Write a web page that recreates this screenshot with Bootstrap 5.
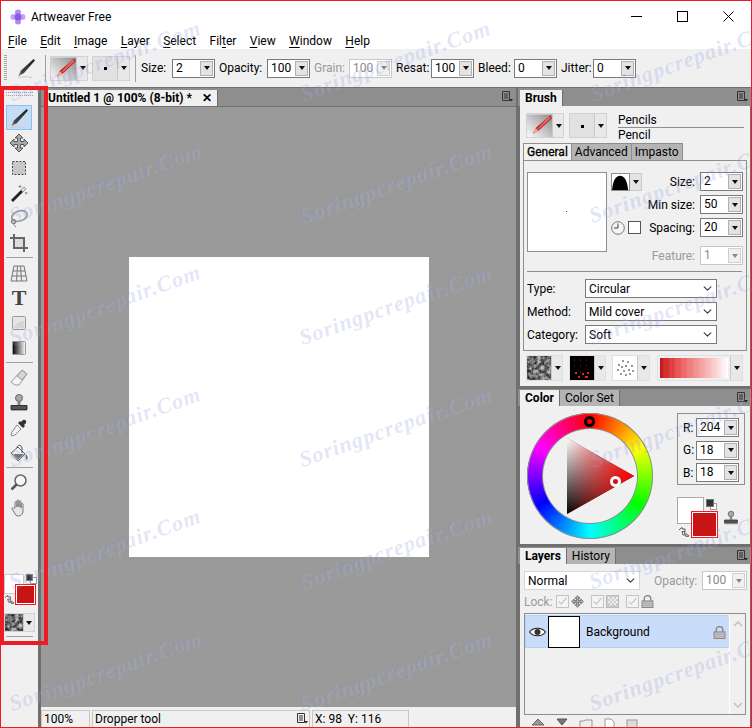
<!DOCTYPE html>
<html lang="en">
<head>
<meta charset="UTF-8">
<title>Artweaver Free</title>
<link href="https://cdn.jsdelivr.net/npm/bootstrap@5.3.0/dist/css/bootstrap.min.css" rel="stylesheet">
<style>
html,body{margin:0;height:728px;overflow:hidden;background:#f0f0f0}
body{font-family:Roboto,"Noto Sans",sans-serif;font-size:12px;line-height:16px;color:#000}
.aw-app{position:relative;width:752px;height:728px;overflow:hidden;display:flex;flex-direction:column}
.aw-title{height:33px;background:#fff;padding-left:10px;flex:none}
.aw-title .aw-name{margin-left:5px}
.aw-winbtns{margin-left:auto;margin-right:18px;gap:35px}
.aw-menu{height:16px;background:#fff;padding-left:8px;gap:13.4px;flex:none}
.aw-menu u{text-underline-offset:2px}
.aw-toolbar{height:38px;background:#f0f0f0;padding-left:4px;flex:none;display:grid;grid-template-columns:3px 25px 6px 38px 38px 3px 27px 43px 44px 43px 31px 43px 31px 43px 32px 43px 28px 43px;column-gap:4px;align-items:center}
.aw-grip-v{width:3px;height:26px;background:repeating-linear-gradient(#a8a8a8 0 1px,transparent 1px 2px)}
.aw-vsep{width:1px;height:27px;background:#a0a0a0;justify-self:end}
.aw-combo{height:19px;border:1px solid #7a7a7a;background:#fff;display:flex;align-items:center;padding-left:3px;position:relative;line-height:15px;box-shadow:inset 0 0 0 1px #fff}
.aw-combo i{position:absolute;right:1px;top:1px;bottom:1px;width:13px;background:#e3e3e3;border:1px solid #b0b0b0}
.aw-combo i::after,.aw-btn i::after{content:"";position:absolute;left:50%;top:50%;margin:-2px 0 0 -3px;border:3px solid transparent;border-top:4px solid #111;border-bottom:0}
.aw-combo.aw-off{border-color:#c8c8c8;color:#8a8a8a}
.aw-combo.aw-off i{background:#f0f0f0;border-color:#d0d0d0}
.aw-combo.aw-off i::after{border-top-color:#888}
.aw-off-text{color:#9a9a9a}
.aw-btn{height:25px;display:flex;border:1px solid #d2d2d2;background:#f0f0f0;overflow:hidden}
.aw-btn svg{flex:none;display:block}
.aw-btn i{flex:none;width:12px;position:relative;background:#e8e8e8;border-left:1px solid #c9c9c9}
.aw-tip{flex:1 1 auto;background:#e1e1e1;position:relative}
.aw-tip::after{content:"";position:absolute;left:50%;top:50%;width:3px;height:3px;margin:-1px 0 0 -1px;background:#000}
.aw-main{flex:1 1 auto;display:flex;background:#6f6f6f;padding-top:1px;min-height:0;border-bottom:1px solid #ed1c24}
.aw-toolbox{width:38px;flex:none;background:#f0f0f0;display:flex;flex-direction:column;align-items:center;padding-top:4px}
.aw-grip-h{width:27px;height:4px;border-top:1px dotted #9a9a9a;border-bottom:1px dotted #9a9a9a;margin-bottom:9px}
.aw-tool{width:26px;height:25px;flex:none;display:flex;align-items:center;justify-content:center;border:1px solid transparent}
.aw-tool.aw-on{background:#c4ddf5;border-color:#8cc2f0}
.aw-tool-t{font-family:"Liberation Serif",serif;font-weight:700;font-size:22px;color:#444;line-height:22px}
.aw-toolsep{width:27px;height:1px;background:#a0a0a0;margin:2px 0;flex:none}
.aw-swatches{position:relative;width:34px;height:31px;margin-top:53px;flex:none}
.aw-sw-back{position:absolute;left:2px;top:1px;width:20px;height:20px;background:#fff;border:1px solid #ccc}
.aw-sw-front{position:absolute;left:13px;top:11px;width:21px;height:21px;background:#c81414;border:1px solid #ed1c24;box-shadow:inset 0 0 0 1px #fff}
.aw-sw-k{position:absolute;left:24px;top:1px;width:7px;height:7px;background:#333;border:1px solid #777}
.aw-sw-w{position:absolute;left:28px;top:4px;width:7px;height:7px;background:#fff;border:1px solid #999}
.aw-sw-swap{position:absolute;left:2px;top:22px}
.aw-texbtn{width:31px;height:19px;margin-top:9px;flex:none}
.aw-doc{width:475px;flex:none;margin-left:3px;display:flex;flex-direction:column;min-height:0}
.aw-strip{height:18px;flex:none;background:#8e8e8e;display:flex;align-items:flex-end;position:relative;padding-left:2px}
.aw-tab{height:16px;padding:0 5px;display:flex;align-items:center;background:#b4b4b4;border-right:1px solid #6f6f6f;line-height:15px}
.aw-tab.aw-act{background:#f0f0f0;font-weight:700}
.aw-panelmenu{position:absolute;right:3px;top:3px}
.aw-doc .aw-tab{margin-left:3px;width:172px;padding:0 5px 0 2px;justify-content:space-between;white-space:nowrap;overflow:hidden}
.aw-canvasarea{height:600px;flex:none;margin-top:1px;background:#9a9a9a;display:flex;align-items:center}
.aw-canvas{width:300px;height:300px;background:#fff;margin-left:88px}
.aw-status{flex:1 1 auto;background:#f0f0f0;display:flex;gap:2px;padding-top:3px}
.aw-field{height:18px;line-height:16px;background:#f0f0f0;border:1px solid #c8c8c8;padding-left:2px;position:relative}
.aw-f1{width:49px}
.aw-f2{width:218px}
.aw-f3{width:97px}
.aw-f2 svg{position:absolute;right:1px;top:2px}
.aw-right{width:233px;flex:none;margin-left:2px;display:flex;flex-direction:column;gap:3px;min-height:0}
.aw-body{background:#f0f0f0;margin:0 1px 0 2px;flex:none}
.aw-brush{height:280px;padding-left:6px;padding-top:7px}
.aw-brushtop{height:25px;gap:5px}
.aw-w38{width:38px}
.aw-names{width:126px;margin-left:6px;line-height:14px}
.aw-names div:first-child{border-bottom:1px solid #8e8e8e;height:15px;line-height:15px}
.aw-names div:last-child{height:14px}
.aw-subtabs{margin:5px 0 0 -3px;height:17px;align-items:flex-end}
.aw-subtabs .aw-tab{height:17px;padding:0 3px;background:#b4b4b4;border:1px solid #8e8e8e;border-bottom:0;border-left:0}
.aw-subtabs .aw-tab.aw-act{background:#f0f0f0;font-weight:400;-webkit-text-stroke:.3px #000;border-left:1px solid #8e8e8e}
.aw-tabbody{width:224px;height:191px;margin-left:-3px;border:1px solid #8e8e8e;padding:11px 3px 0 3px}
.aw-preview{width:80px;height:80px;background:#fff;border:1px solid #8e8e8e;flex:none;position:relative}
.aw-preview::after{content:"";position:absolute;left:38px;top:38px;width:1px;height:1px;background:#333}
.aw-brushgrid{margin-left:4px;width:133px;height:93px}
.aw-brow{height:19px;display:flex;align-items:center;margin-bottom:4px}
.aw-brow.aw-feat{margin-top:9px}
.aw-slot{width:31px;flex:none;display:flex;align-items:center}
.aw-lab{flex:1 1 auto;text-align:right;padding-right:5px;white-space:nowrap}
.aw-w43{width:43px;flex:none}
.aw-curve{width:19px;height:18px;border:1px solid #8e8e8e;flex:none;display:block}
.aw-curvear{flex:none;width:12px;height:18px;background:#e3e3e3;border:1px solid #c9c9c9;border-left:0;position:relative}
.aw-curvear::after{content:"";position:absolute;left:3px;top:6px;border:3px solid transparent;border-top:4px solid #111;border-bottom:0}
.aw-chk{width:13px;height:13px;border:1px solid #555;background:#fff;margin-left:3px;flex:none}
.aw-hline{height:1px;background:#8e8e8e;margin:6px 1px 7px 0}
.aw-selrow{display:flex;align-items:center;height:19px;margin-bottom:4px}
.aw-selrow>span{width:58px;flex:none}
.aw-select.form-select{height:19px;min-height:0;font-size:12px;line-height:15px;padding:1px 0 0 3px;border:1px solid #7a7a7a;border-radius:0;color:#000;background-color:#fff;background-position:right 3px center;background-size:11px 9px;font-family:inherit;box-shadow:none}
.aw-w132{width:132px}
.aw-w116{width:116px}
.aw-select.aw-soft{border-color:#d6d6d6}
.aw-swrow{height:26px;margin:4px 0 0 0;gap:6px}
.aw-swrow .aw-btn{height:26px;border-color:#e0e0e0}
.aw-w37{width:37px}
.aw-w37b{width:38px}
.aw-w86{width:86px;margin-left:1px}
.aw-grad{flex:1 1 auto;margin:2px;background:repeating-linear-gradient(90deg,transparent 0 3px,rgba(255,255,255,.05) 3px 6px),linear-gradient(90deg,#c81414,#e66 35%,#f5b5b5 70%,#fff)}
.aw-strip .aw-tab+.aw-tab{font-weight:400}
.aw-colorstrip{height:17px}
.aw-colorbody{height:138px;padding:7px 0 0 7px}
.aw-wheel{position:relative;width:126px;height:126px;border-radius:50%;flex:none;background:conic-gradient(#f00,#ff0 60deg,#0f0 120deg,#0ff 180deg,#00f 240deg,#f0f 300deg,#f00);box-shadow:0 0 0 1px #8e8e8e inset}
.aw-hole{position:absolute;left:16px;top:16px;width:94px;height:94px;border-radius:50%;background:#f0f0f0;box-shadow:0 0 0 1px #8e8e8e}
.aw-triwrap{position:absolute;left:40px;top:25px;filter:drop-shadow(0 0 .6px #555)}
.aw-tri{width:67px;height:76px;clip-path:polygon(0 0,100% 50%,0 100%);background:linear-gradient(90deg,rgba(255,0,0,0),#f00 98%),linear-gradient(#fff,#000)}
.aw-ring{position:absolute;border-radius:50%;width:11px;height:11px}
.aw-ring1{left:57px;top:3px;border:3px solid #000;background:transparent}
.aw-ring2{left:83px;top:63px;border:3px solid #fff;background:#c81414}
.aw-rgbcol{margin-left:24px;width:68px;flex:none}
.aw-rgbbox{width:68px;height:72px;border:1px solid #8e8e8e;padding:4px 5px 0 5px}
.aw-rgbrow{height:19px;margin-bottom:3.5px;display:flex;align-items:center;justify-content:space-between}
.aw-colorsw{position:relative;height:42px;margin-top:12px;width:70px}
.aw-cs-back{position:absolute;left:0;top:0;width:27px;height:27px;background:#fff;border:1px solid #aaa}
.aw-cs-front{position:absolute;left:14px;top:14px;width:27px;height:27px;background:#c81414;border:1px solid #ed1c24;box-shadow:inset 0 0 0 1px #fff}
.aw-cs-k{position:absolute;left:29px;top:2px;width:8px;height:8px;background:#333;border:1px solid #777}
.aw-cs-w{position:absolute;left:33px;top:6px;width:7px;height:7px;background:#fff;border:1px solid #999}
.aw-cs-swap{position:absolute;left:1px;top:30px}
.aw-cs-stamp{position:absolute;left:46px;top:13px}
.aw-layerbody{flex:1 1 auto;padding:7px 0 0 4px;overflow:hidden;min-height:0}
.aw-layertop{height:19px}
.aw-oplab{margin-left:14px;width:48px;color:#9a9a9a}
.aw-w45{width:45px;flex:none}
.aw-lockrow{height:13px;margin-top:5px;color:#9a9a9a}
.aw-lockrow>span{width:32px;flex:none}
.aw-lk{width:13px;height:13px;flex:none;border:1px solid #c4c4c4;background:#f4f4f4;display:block}
.aw-lkicon{flex:none;margin:0 7px 0 2px;display:block}
.aw-list{width:222px;height:102px;margin-top:5px;border:1px solid #8e8e8e;display:flex;padding-top:1px}
.aw-rows{width:204px;flex:none}
.aw-layer{height:33px;background:#c9dcf9;border:1px solid #b7cff2;border-right-color:#c9dcf9;display:flex;align-items:center;padding-left:3px;position:relative}
.aw-thumb{width:32px;height:32px;background:#fff;border:1px solid #000;margin-left:2px;flex:none}
.aw-layer span{margin-left:6px}
.aw-layer .aw-lklayer{position:absolute;right:2px;top:10px}
.aw-scroll{flex:1 1 auto;border-left:1px solid #fff;display:flex;flex-direction:column;align-items:center;justify-content:space-between;padding:6px 0}
.aw-layerbtns{margin-top:3px;padding-left:7px;gap:11px;height:12px}
.aw-winedge{position:absolute;inset:0;border:1px solid #ed1c24;pointer-events:none}
.aw-highlight{position:absolute;left:0;top:86px;width:48px;height:559px;border:4px solid #ed1c24;pointer-events:none}
.aw-water{position:absolute;left:-40px;top:0;display:grid;grid-template-columns:repeat(3,290px);grid-auto-rows:122px;pointer-events:none}
.aw-water div{display:flex;align-items:center;justify-content:center;font-family:"Liberation Serif",serif;font-style:italic;font-weight:700;font-size:22px;letter-spacing:1px;color:rgba(110,125,215,.2);text-shadow:1px 1px 1px rgba(255,255,255,.12);transform:rotate(-19.500deg);white-space:nowrap}
.aw-defs{position:absolute;width:0;height:0}
</style>
</head>
<body>
<svg class="aw-defs" aria-hidden="true">
  <defs>
    <filter id="noiseF" x="0" y="0" width="100%" height="100%" color-interpolation-filters="sRGB"><feTurbulence type="fractalNoise" baseFrequency=".28" numOctaves="3" seed="4"/><feColorMatrix values="1.100 0 0 0 -.1 1.100 0 0 0 -.1 1.100 0 0 0 -.1 0 0 0 0 1"/></filter>
    <linearGradient id="brushG" x1="1" y1="0" x2="0" y2="1"><stop offset="0" stop-color="#222"/><stop offset=".75" stop-color="#444"/><stop offset="1" stop-color="#aaa"/></linearGradient>
    <linearGradient id="bwG"><stop offset="0" stop-color="#000"/><stop offset="1" stop-color="#fff"/></linearGradient>
    <linearGradient id="pencilBg" x1="0" y1="1" x2="1" y2="0"><stop offset="0" stop-color="#fff"/><stop offset="1" stop-color="#8c8c8c"/></linearGradient>
    <symbol id="iBrush" viewBox="0 0 20 20"><path d="M17.500 1l1.500 1.500L8 15l-6 3.500 3-6z" fill="url(#brushG)"/><path d="M2 19.500c4-1 9-1 14 0" stroke="#ccc" fill="none"/></symbol>
    <symbol id="iMove" viewBox="0 0 20 20"><path d="M10 1l4 4h-2.500v3.500H15V6l4 4-4 4v-2.500h-3.500V15H14l-4 4-4-4h2.500v-3.500H5V14l-4-4 4-4v2.500h3.500V5H6z" fill="#a8a8a8" stroke="#555"/></symbol>
    <symbol id="iMarquee" viewBox="0 0 20 20"><rect x="3.500" y="3.500" width="13" height="13" fill="#c8c8c8" stroke="#444" stroke-dasharray="2 1.500"/></symbol>
    <symbol id="iWand" viewBox="0 0 20 20"><path d="M2 17l10-10 2 2L4 19z" fill="#222"/><path d="M12 7l3-3 2 2-3 3z" fill="#ddd" stroke="#666" stroke-width=".6"/><path d="M11 2v3M9.500 3.500h3M17 9v2.500M16 10h2.500" stroke="#888"/></symbol>
    <symbol id="iLasso" viewBox="0 0 20 20"><ellipse cx="10.500" cy="8" rx="8" ry="5" transform="rotate(-18 10.500 8)" fill="none" stroke="#999" stroke-width="1.800"/><circle cx="4.500" cy="13.500" r="2" fill="none" stroke="#777" stroke-width="1.200"/><path d="M4.500 15.500c.5 1.500 1 2.500 2.500 3.500" stroke="#777" fill="none"/></symbol>
    <symbol id="iCrop" viewBox="0 0 20 20"><path d="M6 6h8v8H6z" fill="#ddd"/><path d="M1 5h14v14M5 1v14h14" fill="none" stroke="#666" stroke-width="2"/></symbol>
    <symbol id="iPersp" viewBox="0 0 20 20"><path d="M5 3h10l3 15H2z" fill="#eee" stroke="#777"/><path d="M3.700 8h12.600M2.800 13h14.400M8.500 3L7.500 18M11.500 3l1 15" stroke="#777" fill="none"/></symbol>
    <symbol id="iShape" viewBox="0 0 20 20"><rect x="3.500" y="3.500" width="13" height="13" rx="1" fill="#e6e6e6" stroke="#999"/><path d="M5 15c2-5 6-7 10-7v7z" fill="#d4d4d4"/></symbol>
    <symbol id="iGrad" viewBox="0 0 20 20"><rect x="3.500" y="3.500" width="13" height="13" rx="1" fill="url(#bwG)" stroke="#999"/></symbol>
    <symbol id="iEraser" viewBox="0 0 20 20"><path d="M13 2l5 4-8 11H6L2 14z" fill="#f4f4f4" stroke="#999"/><path d="M13 2l5 4-5 6-5-4z" fill="#d4d4d4" stroke="#999"/></symbol>
    <symbol id="iStamp" viewBox="0 0 20 20"><circle cx="10" cy="5" r="3.500" fill="#a8a8a8" stroke="#666"/><path d="M8.500 8h3v4h-3z" fill="#888"/><path d="M2 12.500h16v4H2z" fill="#555" stroke="#333"/><path d="M2 17.500h16" stroke="#aaa"/></symbol>
    <symbol id="iDropper" viewBox="0 0 20 20"><path d="M14 2c2-1 4 1 3 3l-2 2 1 1-2 2-5-5 2-2 1 1z" fill="#333"/><path d="M8 7l4 4-6 6-3 1-1-1 1-3z" fill="#f2f2f2" stroke="#888"/></symbol>
    <symbol id="iBucket" viewBox="0 0 20 20"><path d="M2 10l7-6 7 7-7 7z" fill="#eee" stroke="#666"/><path d="M4 11l11 0-6 6z" fill="#777"/><path d="M8 5c0-3 4-4 5 0v5" stroke="#555" fill="none"/><path d="M17 11c2 2 2 5 1 6-1-1-2-3-1-6z" fill="#555"/></symbol>
    <symbol id="iZoom" viewBox="0 0 20 20"><circle cx="11.500" cy="7.500" r="5.500" fill="#f6f6f6" stroke="#666" stroke-width="1.500"/><path d="M7.500 11.500L2.500 16.500" stroke="#555" stroke-width="2.500"/></symbol>
    <symbol id="iHand" viewBox="0 0 20 20"><path d="M6 10V4.500a1 1 0 012 0V9 3a1 1 0 012 0v6-5a1 1 0 012 0v6-3.500a1 1 0 012 0V13c0 3-2 5-4.500 5S6.500 17 5 14l-2-3c-.5-1 1-1.800 1.700-.8z" fill="#e6e6e6" stroke="#777"/></symbol>
    <symbol id="iSwap" viewBox="0 0 12 10"><path d="M1 3l3-2.500V2h3v2.500" fill="#fff" stroke="#555"/><path d="M4 4.500h3L6.500 7H8.500L11 9 8 9.500V8H5z" fill="#fff" stroke="#555"/></symbol>
    <symbol id="iMenu" viewBox="0 0 11 11"><path d="M.5.500h7v9h-7z" fill="none" stroke="#333"/><path d="M2 3h4M2 5h4M2 7h4" stroke="#333"/><path d="M7 8h4L9 10.500z" fill="#222"/></symbol>
    <symbol id="iLock" viewBox="0 0 12 12"><path d="M3 5.500V3.500a3 3 0 016 0v2" fill="none" stroke="#888" stroke-width="1.300"/><rect x="1" y="5.500" width="10" height="6" fill="#c8c8c8" stroke="#888"/><path d="M1 7.500h10M1 9.500h10" stroke="#999" stroke-width=".7"/></symbol>
    <symbol id="iPencil" viewBox="0 0 26 25"><rect width="26" height="25" fill="url(#pencilBg)"/><path d="M24 1l2 3-14 13-6 3 3-6z" fill="#c22024"/><path d="M9 14l3 3-6 3z" fill="#e8b095"/><path d="M23 2l1.500 2L12 15.500l-1-1z" fill="#e8686a"/></symbol>
    <symbol id="iCheck" viewBox="0 0 13 13"><path d="M2 6.500l3 3 6-7" fill="none" stroke="#bdbdbd" stroke-width="1.200"/></symbol>
    <symbol id="iEye" viewBox="0 0 17 10"><path d="M.5 5C4 0 13 0 16.500 5 13 10 4 10 .5 5z" fill="#fff" stroke="#222" stroke-width="1.100"/><circle cx="8.500" cy="5" r="3" fill="#333"/></symbol>
  </defs>
</svg>

<div class="aw-app">
  <div class="aw-title d-flex align-items-center">
    <svg width="16" height="16" viewBox="0 0 16 16"><circle cx="8" cy="3.500" r="3" fill="#b18cf0"/><circle cx="8" cy="12.500" r="3" fill="#b18cf0"/><circle cx="3.500" cy="8" r="3" fill="#c2a4f5"/><circle cx="12.500" cy="8" r="3" fill="#c2a4f5"/><circle cx="8" cy="8" r="3.500" fill="#8a5ce0"/></svg>
    <span class="aw-name">Artweaver Free</span>
    <div class="aw-winbtns d-flex align-items-center">
      <svg width="11" height="11" viewBox="0 0 11 11"><path d="M0 5.500h11" stroke="#000"/></svg>
      <svg width="11" height="11" viewBox="0 0 11 11"><rect x=".5" y=".5" width="10" height="10" fill="none" stroke="#000"/></svg>
      <svg width="11" height="11" viewBox="0 0 11 11"><path d="M.5.500l10 10M10.500.500l-10 10" stroke="#000"/></svg>
    </div>
  </div>
  <div class="aw-menu d-flex align-items-center">
    <span><u>F</u>ile</span><span><u>E</u>dit</span><span><u>I</u>mage</span><span><u>L</u>ayer</span><span><u>S</u>elect</span><span>Fil<u>t</u>er</span><span><u>V</u>iew</span><span><u>W</u>indow</span><span><u>H</u>elp</span>
  </div>
  <div class="aw-toolbar">
    <div class="aw-grip-v"></div>
    <svg class="ms-auto" width="20" height="20"><use href="#iBrush"/></svg>
    <div class="aw-vsep"></div>
    <div class="aw-btn"><svg width="25" height="25"><use href="#iPencil"/></svg><i></i></div>
    <div class="aw-btn"><div class="aw-tip"></div><i></i></div>
    <div class="aw-vsep mx-auto"></div>
    <span>Size:</span><div class="aw-combo"><span>2</span><i></i></div>
    <span>Opacity:</span><div class="aw-combo"><span>100</span><i></i></div>
    <span class="aw-off-text">Grain:</span><div class="aw-combo aw-off"><span>100</span><i></i></div>
    <span>Resat:</span><div class="aw-combo"><span>100</span><i></i></div>
    <span>Bleed:</span><div class="aw-combo"><span>0</span><i></i></div>
    <span>Jitter:</span><div class="aw-combo"><span>0</span><i></i></div>
  </div>

  <div class="aw-main">
    <div class="aw-toolbox">
      <div class="aw-grip-h"></div>
      <div class="aw-tool aw-on"><svg width="20" height="20"><use href="#iBrush"/></svg></div>
      <div class="aw-tool"><svg width="20" height="20"><use href="#iMove"/></svg></div>
      <div class="aw-tool"><svg width="20" height="20"><use href="#iMarquee"/></svg></div>
      <div class="aw-tool"><svg width="20" height="20"><use href="#iWand"/></svg></div>
      <div class="aw-tool"><svg width="20" height="20"><use href="#iLasso"/></svg></div>
      <div class="aw-tool"><svg width="20" height="20"><use href="#iCrop"/></svg></div>
      <div class="aw-toolsep"></div>
      <div class="aw-tool"><svg width="20" height="20"><use href="#iPersp"/></svg></div>
      <div class="aw-tool aw-tool-t">T</div>
      <div class="aw-tool"><svg width="20" height="20"><use href="#iShape"/></svg></div>
      <div class="aw-tool"><svg width="20" height="20"><use href="#iGrad"/></svg></div>
      <div class="aw-toolsep"></div>
      <div class="aw-tool"><svg width="20" height="20"><use href="#iEraser"/></svg></div>
      <div class="aw-tool"><svg width="20" height="20"><use href="#iStamp"/></svg></div>
      <div class="aw-tool"><svg width="20" height="20"><use href="#iDropper"/></svg></div>
      <div class="aw-tool"><svg width="20" height="20"><use href="#iBucket"/></svg></div>
      <div class="aw-toolsep"></div>
      <div class="aw-tool"><svg width="20" height="20"><use href="#iZoom"/></svg></div>
      <div class="aw-tool"><svg width="20" height="20"><use href="#iHand"/></svg></div>
      <div class="aw-swatches">
        <div class="aw-sw-back"></div><div class="aw-sw-w"></div><div class="aw-sw-k"></div><div class="aw-sw-front"></div>
        <svg class="aw-sw-swap" width="11" height="9"><use href="#iSwap"/></svg>
      </div>
      <div class="aw-btn aw-texbtn"><svg width="18" height="19"><rect width="18" height="19" filter="url(#noiseF)"/></svg><i></i></div>
      <div class="aw-toolsep mt-1"></div>
    </div>

    <div class="aw-doc">
      <div class="aw-strip">
        <div class="aw-tab aw-act"><span>Untitled 1 @ 100% (8-bit) *</span><span>✕</span></div>
        <svg class="aw-panelmenu" width="11" height="11"><use href="#iMenu"/></svg>
      </div>
      <div class="aw-canvasarea"><div class="aw-canvas"></div></div>
      <div class="aw-status">
        <div class="aw-field aw-f1">100%</div>
        <div class="aw-field aw-f2">Dropper tool<svg width="11" height="11"><use href="#iMenu"/></svg></div>
        <div class="aw-field aw-f3">X: 98&nbsp; Y: 116</div>
      </div>
    </div>

    <div class="aw-right">
      <div>
        <div class="aw-strip"><div class="aw-tab aw-act">Brush</div><svg class="aw-panelmenu" width="11" height="11"><use href="#iMenu"/></svg></div>
        <div class="aw-body aw-brush">
          <div class="aw-brushtop d-flex">
            <div class="aw-btn aw-w38"><svg width="25" height="25"><use href="#iPencil"/></svg><i></i></div>
            <div class="aw-btn aw-w38"><div class="aw-tip"></div><i></i></div>
            <div class="aw-names"><div>Pencils</div><div>Pencil</div></div>
          </div>
          <div class="aw-subtabs d-flex">
            <div class="aw-tab aw-act">General</div><div class="aw-tab">Advanced</div><div class="aw-tab">Impasto</div>
          </div>
          <div class="aw-tabbody">
            <div class="d-flex">
              <div class="aw-preview"></div>
              <div class="aw-brushgrid">
                <div class="aw-brow"><div class="aw-slot"><svg class="aw-curve" width="19" height="18" viewBox="0 0 19 18"><rect width="19" height="18" fill="#fff"/><path d="M0 18C1 6 5 2 9 2s8 4 9 16z" fill="#000"/></svg><div class="aw-curvear"></div></div><div class="aw-lab">Size:</div><div class="aw-combo aw-w43"><span>2</span><i></i></div></div>
                <div class="aw-brow"><div class="aw-slot"></div><div class="aw-lab">Min size:</div><div class="aw-combo aw-w43"><span>50</span><i></i></div></div>
                <div class="aw-brow"><div class="aw-slot"><svg width="14" height="14" viewBox="0 0 14 14"><circle cx="7" cy="7" r="6.300" fill="#f4f4f4" stroke="#777"/><path d="M7 2.500V7H3" stroke="#444" fill="none"/></svg><div class="aw-chk"></div></div><div class="aw-lab">Spacing:</div><div class="aw-combo aw-w43"><span>20</span><i></i></div></div>
                <div class="aw-brow aw-feat"><div class="aw-slot"></div><div class="aw-lab aw-off-text">Feature:</div><div class="aw-combo aw-off aw-w43"><span>1</span><i></i></div></div>
              </div>
            </div>
            <div class="aw-hline"></div>
            <div class="aw-selrow"><span>Type:</span><select class="form-select aw-select aw-w132"><option>Circular</option></select></div>
            <div class="aw-selrow"><span>Method:</span><select class="form-select aw-select aw-w132"><option>Mild cover</option></select></div>
            <div class="aw-selrow"><span>Category:</span><select class="form-select aw-select aw-w132"><option>Soft</option></select></div>
          </div>
          <div class="aw-swrow d-flex">
            <div class="aw-btn aw-w37"><svg width="24" height="24"><rect width="24" height="24" filter="url(#noiseF)"/></svg><i></i></div>
            <div class="aw-btn aw-w37"><svg width="24" height="24"><rect width="24" height="24" fill="#000"/><path d="M4 4h1M10 4h1M16 4h1M4 10h1M10 10h1M16 10h1M10 16h1" stroke="#a22" stroke-width="1"/><path d="M5 17h2M12 18h2M17 17h2M15 21h3M8 21h2" stroke="#e22" stroke-width="2"/></svg><i></i></div>
            <div class="aw-btn aw-w37b"><svg width="24" height="24"><rect width="24" height="24" fill="#fff"/><g fill="#777"><circle cx="6" cy="9" r="1"/><circle cx="10" cy="5" r="1"/><circle cx="15" cy="6" r="1"/><circle cx="19" cy="10" r="1"/><circle cx="9" cy="11" r="1"/><circle cx="13" cy="10" r="1"/><circle cx="5" cy="14" r="1"/><circle cx="11" cy="15" r="1"/><circle cx="16" cy="14" r="1"/><circle cx="20" cy="15" r="1"/><circle cx="8" cy="18" r="1"/><circle cx="13" cy="19" r="1"/><circle cx="17" cy="18" r="1"/></g></svg><i></i></div>
            <div class="aw-btn aw-w86"><div class="aw-grad"></div><i></i></div>
          </div>
        </div>
      </div>

      <div>
        <div class="aw-strip aw-colorstrip"><div class="aw-tab aw-act">Color</div><div class="aw-tab">Color Set</div><svg class="aw-panelmenu" width="11" height="11"><use href="#iMenu"/></svg></div>
        <div class="aw-body aw-colorbody d-flex">
          <div class="aw-wheel">
            <div class="aw-hole"></div>
            <div class="aw-triwrap"><div class="aw-tri"></div></div>
            <div class="aw-ring aw-ring1"></div>
            <div class="aw-ring aw-ring2"></div>
          </div>
          <div class="aw-rgbcol">
            <div class="aw-rgbbox">
              <div class="aw-rgbrow"><span>R:</span><div class="aw-combo aw-w43"><span>204</span><i></i></div></div>
              <div class="aw-rgbrow"><span>G:</span><div class="aw-combo aw-w43"><span>18</span><i></i></div></div>
              <div class="aw-rgbrow"><span>B:</span><div class="aw-combo aw-w43"><span>18</span><i></i></div></div>
            </div>
            <div class="aw-colorsw">
              <div class="aw-cs-back"></div><div class="aw-cs-w"></div><div class="aw-cs-k"></div><div class="aw-cs-front"></div>
              <svg class="aw-cs-swap" width="12" height="10"><use href="#iSwap"/></svg>
              <svg class="aw-cs-stamp" width="16" height="16"><use href="#iStamp"/></svg>
            </div>
          </div>
        </div>
      </div>

      <div class="d-flex flex-column flex-grow-1">
        <div class="aw-strip aw-colorstrip"><div class="aw-tab aw-act">Layers</div><div class="aw-tab">History</div><svg class="aw-panelmenu" width="11" height="11"><use href="#iMenu"/></svg></div>
        <div class="aw-body aw-layerbody">
          <div class="aw-layertop d-flex align-items-center">
            <select class="form-select aw-select aw-soft aw-w116"><option>Normal</option></select>
            <div class="aw-oplab">Opacity:</div>
            <div class="aw-combo aw-off aw-w45"><span>100</span><i></i></div>
          </div>
          <div class="aw-lockrow d-flex align-items-center">
            <span>Lock:</span>
            <svg class="aw-lk" width="13" height="13"><use href="#iCheck"/></svg>
            <svg class="aw-lkicon" width="13" height="13"><use href="#iMove"/></svg>
            <svg class="aw-lk" width="13" height="13"><use href="#iCheck"/></svg>
            <svg class="aw-lkicon" width="13" height="13"><rect width="13" height="13" fill="#ccc" stroke="#aaa"/><path d="M2 2h2v2H2zM6 2h2v2H6zM10 2h2v2h-2zM4 4h2v2H4zM8 4h2v2H8zM2 6h2v2H2zM6 6h2v2H6zM10 6h2v2h-2zM4 8h2v2H4zM8 8h2v2H8z" fill="#eee"/></svg>
            <svg class="aw-lk" width="13" height="13"><use href="#iCheck"/></svg>
            <svg class="aw-lkicon" width="13" height="13"><use href="#iLock"/></svg>
          </div>
          <div class="aw-list">
            <div class="aw-rows">
              <div class="aw-layer">
                <svg width="17" height="10"><use href="#iEye"/></svg>
                <div class="aw-thumb"></div>
                <span>Background</span>
                <svg class="aw-lklayer" width="13" height="13"><use href="#iLock"/></svg>
              </div>
            </div>
            <div class="aw-scroll">
              <svg width="10" height="6" viewBox="0 0 10 6"><path d="M1 5l4-4 4 4" fill="none" stroke="#c0c0c0" stroke-width="1.500"/></svg>
              <svg width="10" height="6" viewBox="0 0 10 6"><path d="M1 1l4 4 4-4" fill="none" stroke="#c0c0c0" stroke-width="1.500"/></svg>
            </div>
          </div>
          <div class="aw-layerbtns d-flex align-items-start">
            <svg width="14" height="12"><path d="M7 1l6 6H1z" fill="#999" stroke="#666"/></svg>
            <svg width="12" height="12"><path d="M1 1h10L6 7z" fill="#777" stroke="#555"/></svg>
            <svg width="14" height="12"><path d="M1 3h4l1-1h7v10H1z" fill="#eee" stroke="#999"/></svg>
            <svg width="11" height="12"><path d="M1 1h6l3 3v8H1z" fill="#fff" stroke="#999"/></svg>
            <svg width="12" height="12"><rect x="1" y="2" width="10" height="10" fill="#ddd" stroke="#999"/></svg>
          </div>
        </div>
      </div>
    </div>
  </div>

  <div class="aw-water">
    <div>Soringpcrepair.Com</div><div>Soringpcrepair.Com</div><div>Soringpcrepair.Com</div>
    <div>Soringpcrepair.Com</div><div>Soringpcrepair.Com</div><div>Soringpcrepair.Com</div>
    <div>Soringpcrepair.Com</div><div>Soringpcrepair.Com</div><div>Soringpcrepair.Com</div>
    <div>Soringpcrepair.Com</div><div>Soringpcrepair.Com</div><div>Soringpcrepair.Com</div>
    <div>Soringpcrepair.Com</div><div>Soringpcrepair.Com</div><div>Soringpcrepair.Com</div>
    <div>Soringpcrepair.Com</div><div>Soringpcrepair.Com</div><div>Soringpcrepair.Com</div>
  </div>
  <div class="aw-highlight"></div>
  <div class="aw-winedge"></div>
</div>
<script src="https://cdn.jsdelivr.net/npm/bootstrap@5.3.0/dist/js/bootstrap.bundle.min.js"></script>
</body>
</html>
